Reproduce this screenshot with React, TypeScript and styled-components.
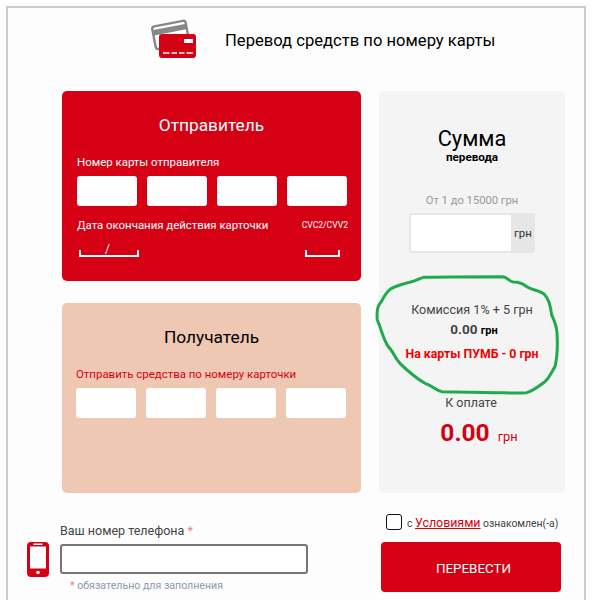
import React from "react";
import styled, { createGlobalStyle } from "styled-components";

const Global = createGlobalStyle`
  html, body { margin: 0; padding: 0; background: #fff; overflow: hidden; }
  body { font-family: Roboto, "Open Sans", sans-serif; color: #333; }
`;

const Frame = styled.div`
  position: relative;
  box-sizing: border-box;
  margin: 6px 0 0 6px;
  width: 580px;
  height: 594px;
  border: 2px solid #ccc;
  border-bottom: none;
  background: #fdfdfd;
`;

const Header = styled.header`
  display: flex;
  align-items: center;
  height: 61px;
  padding-left: 142px;
  gap: 29px;
`;

const Title = styled.h1`
  margin: 0 0 -4px;
  font-size: 16.6px;
  font-weight: 400;
  color: #000;
  white-space: nowrap;
`;

const Main = styled.div`
  display: flex;
  gap: 18px;
  padding: 22px 0 0 54px;
`;

const LeftColumn = styled.div`
  display: flex;
  flex-direction: column;
  gap: 22px;
  width: 299px;
`;

const Panel = styled.section<{ $bg: string; $pad: number }>`
  box-sizing: border-box;
  height: 190px;
  border-radius: 5px;
  background: ${(p) => p.$bg};
  padding: 22px 0 0 ${(p) => p.$pad}px;
`;

const PanelTitle = styled.h2<{ $color: string; $pad: number }>`
  margin: 0 0 17px -${(p) => p.$pad}px;
  font-size: 17.3px;
  line-height: 24px;
  font-weight: 400;
  text-align: center;
  color: ${(p) => p.$color};
`;

const FieldLabel = styled.div<{ $color: string }>`
  font-size: 11.45px;
  line-height: 16px;
  color: ${(p) => p.$color};
  margin-bottom: 6px;
  white-space: nowrap;
`;

const CardRow = styled.div`
  display: flex;
  gap: 10px;
`;

const CardInput = styled.input`
  box-sizing: border-box;
  width: 60px;
  height: 30px;
  border: none;
  border-radius: 3px;
  background: #fff;
  padding: 0;
`;

const ExpiryLabels = styled.div`
  display: flex;
  justify-content: space-between;
  align-items: center;
  width: 271px;
  margin-top: 11px;
  color: #fff;
`;

const ExpiryText = styled.span`
  font-size: 11.4px;
  line-height: 16px;
  white-space: nowrap;
`;

const CvcText = styled.span`
  font-size: 8.6px;
  line-height: 16px;
`;

const ExpiryFields = styled.div`
  display: flex;
  justify-content: space-between;
  width: 261px;
  margin: 17px 0 0 2px;
`;

const Bracket = styled.div<{ $w: number }>`
  box-sizing: border-box;
  width: ${(p) => p.$w}px;
  height: 7px;
  border: 2px solid #fff;
  border-top: none;
  position: relative;
`;

const BracketSlash = styled.span`
  position: absolute;
  left: 24px;
  bottom: 0;
  color: #fff;
  font-size: 12px;
  line-height: 12px;
`;

const SumPanel = styled.aside`
  box-sizing: border-box;
  width: 186px;
  height: 402px;
  border-radius: 5px;
  background: #f4f4f4;
  padding-top: 35px;
  display: flex;
  flex-direction: column;
  align-items: center;
`;

const SumTitle = styled.div`
  font-size: 21.8px;
  line-height: 26px;
  color: #000;
`;

const SumSubtitle = styled.div`
  font-size: 11.7px;
  line-height: 12px;
  font-weight: 700;
  color: #000;
  margin-top: -1px;
`;

const Range = styled.div`
  margin-top: 31px;
  font-size: 11.2px;
  line-height: 14px;
  color: #999;
`;

const AmountBox = styled.div`
  box-sizing: border-box;
  margin-top: 5px;
  width: 126px;
  height: 40px;
  border-radius: 3px;
  background: #e6e6e6;
  padding: 2px 0 2px 2px;
  display: flex;
  align-items: center;
`;

const AmountInput = styled.input`
  box-sizing: border-box;
  width: 100px;
  height: 36px;
  border: none;
  background: #fff;
  padding: 0;
`;

const AmountUnit = styled.span`
  flex: 1;
  text-align: center;
  font-size: 11.5px;
  color: #333;
`;

const Commission = styled.div`
  margin-top: 49px;
  font-size: 12.6px;
  line-height: 16px;
  color: #444;
`;

const CommissionValue = styled.div`
  margin: 3px 0 0 4px;
  font-size: 13.5px;
  line-height: 16px;
  font-weight: 700;
  color: #444;
`;

const SmallUnit = styled.span`
  font-size: 11px;
  color: #000;
`;

const Promo = styled.div`
  margin-top: 8px;
  font-size: 12.3px;
  line-height: 14px;
  font-weight: 700;
  color: #f00000;
  white-space: nowrap;
`;

const PayLabel = styled.div`
  margin: 34px 2px 0 0;
  font-size: 12.5px;
  line-height: 16px;
  color: #444;
`;

const PayValue = styled.div`
  margin: 6px 0 0 14px;
  font-size: 24.5px;
  line-height: 32px;
  font-weight: 700;
  color: #d60014;
  white-space: nowrap;
`;

const PayUnit = styled.span`
  font-size: 12.8px;
  font-weight: 400;
  margin-left: 2px;
`;

const Footer = styled.div`
  display: flex;
  padding: 30px 0 0 19px;
`;

const PhoneBlock = styled.div`
  display: flex;
  align-items: flex-start;
  width: 354px;
  gap: 11px;
`;

const PhoneIconWrap = styled.div`
  padding-top: 19px;
  line-height: 0;
`;

const PhoneFields = styled.div`
  width: 248px;
`;

const PhoneLabel = styled.div`
  font-size: 12.5px;
  line-height: 16px;
  color: #444;
`;

const Star = styled.span`
  color: #f08080;
`;

const PhoneInput = styled.input`
  display: block;
  box-sizing: border-box;
  width: 248px;
  height: 30px;
  margin-top: 5px;
  border: 2px solid #757575;
  border-radius: 3px;
  background: #fff;
  padding: 0;
`;

const Hint = styled.div`
  margin: 5px 0 0 10px;
  font-size: 10.6px;
  line-height: 14px;
  color: #8a9cb0;
  white-space: nowrap;
`;

const SubmitBlock = styled.div`
  width: 180px;
  margin-top: -10px;
`;

const AgreeRow = styled.label`
  display: flex;
  align-items: center;
  height: 18px;
  margin-left: 5px;
  gap: 5px;
  font-size: 10.4px;
  color: #444;
  white-space: nowrap;
`;

const Checkbox = styled.span`
  box-sizing: border-box;
  width: 16px;
  height: 16px;
  border: 1px solid #111;
  border-radius: 3px;
  background: #fff;
  flex: none;
`;

const TermsLink = styled.a`
  font-size: 12.4px;
  color: #d60014;
  text-decoration: underline;
`;

const Submit = styled.button`
  display: block;
  width: 180px;
  height: 50px;
  margin-top: 11px;
  padding: 3px 0 0 5px;
  border: none;
  border-radius: 4px;
  background: #d60014;
  color: #fff;
  font-family: inherit;
  font-size: 13.4px;
`;

const Annotation = styled.svg`
  position: absolute;
  left: 362px;
  top: 262px;
  pointer-events: none;
`;

const CardsIcon = () => (
  <svg width="46" height="41" viewBox="0 0 46 41">
    <g transform="rotate(-11 20 16)">
      <rect x="3.5" y="5.5" width="34" height="23" rx="2.5" fill="#fff" stroke="#888" strokeWidth="2.4" />
      <rect x="3" y="9" width="35" height="5.5" fill="#888" />
    </g>
    <rect x="9" y="16" width="37" height="24" rx="3" fill="#d60014" />
    <rect x="34" y="21" width="9" height="4" fill="#fff" />
    <path d="M13 35h6.5M21.5 35h5.5M29 35h5.5M36.500 35h6.500" stroke="#fff" strokeWidth="1.4" />
  </svg>
);

const PhoneIcon = () => (
  <svg width="22" height="35" viewBox="0 0 22 35">
    <rect width="22" height="35" rx="4" fill="#d60014" />
    <rect x="3" y="4.500" width="16" height="22" rx="0.5" fill="#fff" />
    <rect x="6.500" y="1.500" width="9" height="1.500" fill="#fff" />
    <circle cx="11" cy="30.500" r="1.800" fill="#fff" />
  </svg>
);

const cardFields = [0, 1, 2, 3];

export default function App() {
  return (
    <>
      <Global />
      <Frame>
        <Header>
          <CardsIcon />
          <Title>Перевод средств по номеру карты</Title>
        </Header>
        <Main>
          <LeftColumn>
            <Panel $bg="#d60014" $pad={15}>
              <PanelTitle $color="#fff" $pad={15}>Отправитель</PanelTitle>
              <FieldLabel $color="#fff">Номер карты отправителя</FieldLabel>
              <CardRow>
                {cardFields.map((i) => <CardInput key={i} />)}
              </CardRow>
              <ExpiryLabels>
                <ExpiryText>Дата окончания действия карточки</ExpiryText>
                <CvcText>CVC2/CVV2</CvcText>
              </ExpiryLabels>
              <ExpiryFields>
                <Bracket $w={60}><BracketSlash>/</BracketSlash></Bracket>
                <Bracket $w={35} />
              </ExpiryFields>
            </Panel>
            <Panel $bg="#eec8b2" $pad={14}>
              <PanelTitle $color="#000" $pad={14}>Получатель</PanelTitle>
              <FieldLabel $color="#d60014">Отправить средства по номеру карточки</FieldLabel>
              <CardRow>
                {cardFields.map((i) => <CardInput key={i} />)}
              </CardRow>
            </Panel>
          </LeftColumn>
          <SumPanel>
            <SumTitle>Сумма</SumTitle>
            <SumSubtitle>перевода</SumSubtitle>
            <Range>От 1 до 15000 грн</Range>
            <AmountBox>
              <AmountInput />
              <AmountUnit>грн</AmountUnit>
            </AmountBox>
            <Commission>Комиссия 1% + 5 грн</Commission>
            <CommissionValue>0.00 <SmallUnit>грн</SmallUnit></CommissionValue>
            <Promo>На карты ПУМБ - 0 грн</Promo>
            <PayLabel>К оплате</PayLabel>
            <PayValue>0.00 <PayUnit>грн</PayUnit></PayValue>
          </SumPanel>
        </Main>
        <Footer>
          <PhoneBlock>
            <PhoneIconWrap><PhoneIcon /></PhoneIconWrap>
            <PhoneFields>
              <PhoneLabel>Ваш номер телефона <Star>*</Star></PhoneLabel>
              <PhoneInput />
              <Hint><Star>*</Star> обязательно для заполнения</Hint>
            </PhoneFields>
          </PhoneBlock>
          <SubmitBlock>
            <AgreeRow>
              <Checkbox />
              <span>с <TermsLink>Условиями</TermsLink> ознакомлен(-а)</span>
            </AgreeRow>
            <Submit>ПЕРЕВЕСТИ</Submit>
          </SubmitBlock>
        </Footer>
        <Annotation width="224" height="230" viewBox="0 0 672 690">
          <path
            d="M160 22C200 20 250 20 400 20C412 22 418 35 430 36C445 36 458 40 470 50C490 62 512 62 522 72C538 88 540 105 545 135C552 150 560 165 561 190C563 220 562 260 555 290C545 305 540 320 525 335C505 350 490 362 470 368C430 370 400 368 380 368L215 365C195 360 185 345 165 340C140 325 110 300 90 280C75 265 70 245 55 230C40 210 35 180 22 150C20 130 22 110 30 100C38 90 45 70 60 58C75 48 95 42 125 35C140 32 150 25 160 22Z"
            fill="none"
            stroke="#1faa4e"
            strokeWidth="9"
            strokeLinejoin="round"
          />
        </Annotation>
      </Frame>
    </>
  );
}
